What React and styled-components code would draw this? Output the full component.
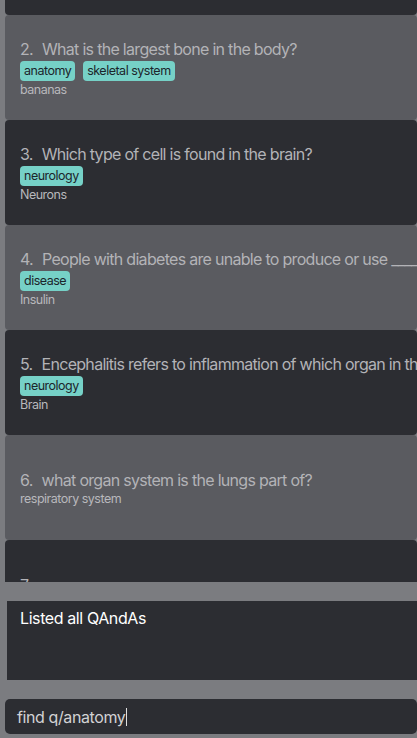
import React from 'react';
import styled, { createGlobalStyle } from "styled-components";

const cards = [
  { n: 1, q: "What is the function of the heart?", tags: ["anatomy"], a: "pumps blood" },
  { n: 2, q: "What is the largest bone in the body?", tags: ["anatomy", "skeletal system"], a: "bananas" },
  { n: 3, q: "Which type of cell is found in the brain?", tags: ["neurology"], a: "Neurons" },
  { n: 4, q: "People with diabetes are unable to produce or use ________", tags: ["disease"], a: "Insulin" },
  { n: 5, q: "Encephalitis refers to inflammation of which organ in the body?", tags: ["neurology"], a: "Brain" },
  { n: 6, q: "what organ system is the lungs part of?", tags: [], a: "respiratory system" },
  { n: 7, q: "name a rare sense organ", tags: [], a: "vomeronasal organ" },
];

const App = () => {
  return <Page>
    <GlobalStyle />
    <ListPanel>
      <ListInner>
        {cards.map((c) => (
          <Card key={c.n} $light={c.n % 2 === 0}>
            <Title><Num>{c.n}.</Num>{c.q}</Title>
            {c.tags.length > 0 && <Tags>
              {c.tags.map((t) => <Tag key={t}>{t}</Tag>)}
            </Tags>}
            <Answer>{c.a}</Answer>
          </Card>
        ))}
      </ListInner>
    </ListPanel>
    <ResultBox>Listed all QAndAs</ResultBox>
    <CommandBox>find q/anatomy<Cursor /></CommandBox>
  </Page>
}

export default App;

const GlobalStyle = createGlobalStyle`
  body {
    margin: 0;
    background-color: #7b7c80;
    font-family: Inter, "Noto Sans", sans-serif;
  }
`;

const Page = styled.div`
  display: flex;
  flex-direction: column;
  height: 738px;
  overflow: hidden;
`;

const ListPanel = styled.div`
  margin-left: 5px;
  height: 582px;
  overflow: hidden;
  flex-shrink: 0;
`;

const ListInner = styled.div`
  margin-top: -90px;
`;

const Card = styled.div`
  height: 105px;
  box-sizing: border-box;
  padding: 1px 0 0 15px;
  display: flex;
  flex-direction: column;
  justify-content: center;
  background-color: ${(p) => (p.$light ? "#5a5b60" : "#2c2d32")};
  border-radius: 4px;
  white-space: nowrap;
  overflow: hidden;
`;

const Title = styled.div`
  font-size: 16px;
  line-height: 20px;
  color: #b3b3b7;
  letter-spacing: -0.7px;
`;

const Num = styled.span`
  margin-right: 9px;
`;

const Tags = styled.div`
  display: flex;
  gap: 8px;
  margin-top: 2px;
`;

const Tag = styled.span`
  background-color: #76d1c7;
  color: #1c252b;
  font-size: 12.5px;
  line-height: 20px;
  padding: 0 4px;
  border-radius: 4px;
  letter-spacing: -0.5px;
`;

const Answer = styled.div`
  font-size: 12.5px;
  line-height: 17px;
  color: #b8b8bc;
  letter-spacing: -0.5px;
`;

const ResultBox = styled.div`
  margin: 19px 0 0 7px;
  height: 79px;
  box-sizing: border-box;
  padding: 8px 13px;
  background-color: #2c2d32;
  color: #ffffff;
  font-size: 16px;
  line-height: 19px;
  letter-spacing: -0.4px;
  flex-shrink: 0;
`;

const CommandBox = styled.div`
  margin: 19px 0 0 5px;
  height: 35px;
  box-sizing: border-box;
  padding-left: 12px;
  display: flex;
  align-items: center;
  background-color: #2c2d32;
  border-radius: 5px;
  color: #d2d2d4;
  font-size: 16px;
  letter-spacing: -0.4px;
  flex-shrink: 0;
`;

const Cursor = styled.span`
  display: inline-block;
  width: 1px;
  height: 18px;
  background-color: #e0e0e0;
  margin-left: 1px;
`;
